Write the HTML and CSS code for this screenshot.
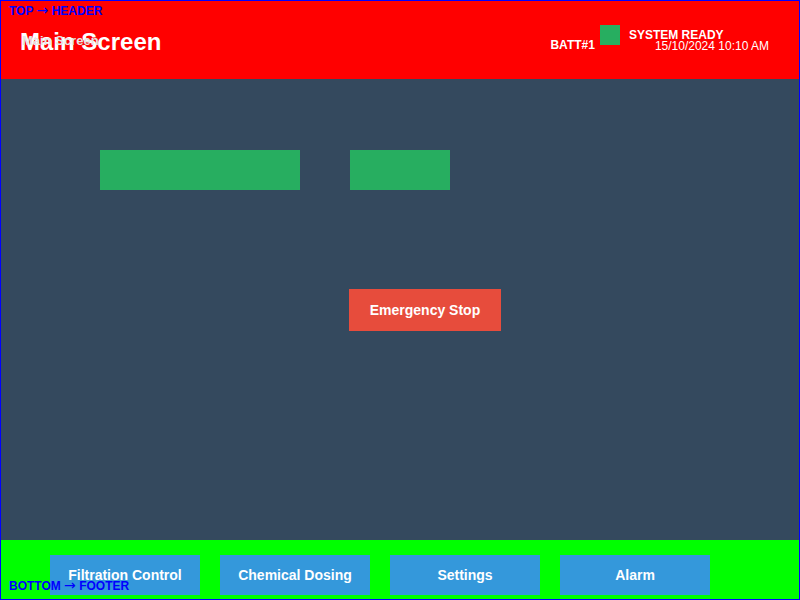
FILE: index.html
```html
<!DOCTYPE html>
<html>
<head>
<meta charset="utf-8">
<link rel="stylesheet" href="styles.css">
</head>
<body>
<div class="screen">
  <header class="header">
    <span class="zone-label zone-top">TOP <span class="arrow">→</span> HEADER</span>
    <div class="title-wrap">
      <h1 class="title">Main Screen</h1>
      <span class="title-small">Main Screen</span>
    </div>
    <div class="status">
      <span class="batt">BATT#1</span>
      <span class="led"></span>
      <div class="status-text">
        <span class="ready">SYSTEM READY</span>
        <span class="clock">15/10/2024 10:10 AM</span>
      </div>
    </div>
  </header>
  <main class="main">
    <div class="bars">
      <div class="bar bar-wide"></div>
      <div class="bar bar-narrow"></div>
    </div>
    <button class="estop">Emergency Stop</button>
  </main>
  <footer class="footer">
    <span class="zone-label zone-bottom">BOTTOM <span class="arrow">→</span> FOOTER</span>
    <button class="nav-btn">Filtration Control</button>
    <button class="nav-btn">Chemical Dosing</button>
    <button class="nav-btn">Settings</button>
    <button class="nav-btn">Alarm</button>
  </footer>
</div>
</body>
</html>
```
FILE: styles.css
```css
* { box-sizing: border-box; }
html, body { margin: 0; padding: 0; }
body { font-family: "Liberation Sans", Arial, sans-serif; }

.screen {
  width: 800px;
  height: 600px;
  border: 1px solid #0000ff;
  display: flex;
  flex-direction: column;
  position: relative;
  overflow: hidden;
}

.header {
  height: 78px;
  flex: none;
  background: #ff0000;
  display: flex;
  justify-content: space-between;
  align-items: flex-start;
  padding-left: 19px;
  position: relative;
}

.zone-label {
  position: absolute;
  left: 8px;
  font-size: 12px;
  font-weight: bold;
  line-height: 14px;
  color: #0000ff;
  z-index: 5;
  white-space: nowrap;
}
.zone-label .arrow {
  font-family: "DejaVu Sans", sans-serif;
  font-weight: normal;
  font-size: 14px;
  line-height: 12px;
}
.zone-top { top: 3px; }
.zone-bottom { bottom: 6px; }

.title-wrap {
  position: relative;
  margin-top: 27px;
}
.title {
  margin: 0;
  font-size: 24px;
  line-height: 28px;
  font-weight: bold;
  color: #ffffff;
}
.title-small {
  position: absolute;
  left: 2px;
  top: 5px;
  font-size: 13px;
  font-weight: bold;
  line-height: 15px;
  color: #e6e6e6;
  white-space: nowrap;
}

.status {
  display: flex;
  align-items: flex-start;
  margin-top: 24px;
  margin-right: 30px;
}
.batt {
  margin-top: 13px;
  margin-right: 5px;
  font-size: 12px;
  font-weight: bold;
  line-height: 14px;
  color: #ffffff;
}
.led {
  width: 20px;
  height: 20px;
  background: #27ae60;
}
.status-text {
  display: flex;
  flex-direction: column;
  margin-left: 9px;
  margin-top: 3px;
  color: #ffffff;
  font-size: 12px;
}
.ready {
  font-weight: bold;
  line-height: 14px;
}
.clock {
  align-self: flex-end;
  line-height: 11px;
  margin-top: -1px;
  margin-left: 26px;
}

.main {
  flex: 1;
  background: #34495e;
  padding: 71px 0 0 99px;
}
.bars {
  display: flex;
  gap: 50px;
}
.bar {
  height: 40px;
  background: #27ae60;
}
.bar-wide { width: 200px; }
.bar-narrow { width: 100px; }

.estop {
  display: block;
  margin: 99px 0 0 249px;
  width: 152px;
  height: 42px;
  border: none;
  padding: 0;
  background: #e74c3c;
  color: #ffffff;
  font-family: "Liberation Sans", Arial, sans-serif;
  font-size: 14px;
  font-weight: bold;
}

.footer {
  height: 59px;
  flex: none;
  background: #00ff00;
  display: flex;
  align-items: flex-start;
  gap: 20px;
  padding: 15px 0 0 49px;
  position: relative;
}
.nav-btn {
  width: 150px;
  height: 40px;
  border: none;
  padding: 0;
  background: #3498db;
  color: #ffffff;
  font-family: "Liberation Sans", Arial, sans-serif;
  font-size: 14px;
  font-weight: bold;
}
```
